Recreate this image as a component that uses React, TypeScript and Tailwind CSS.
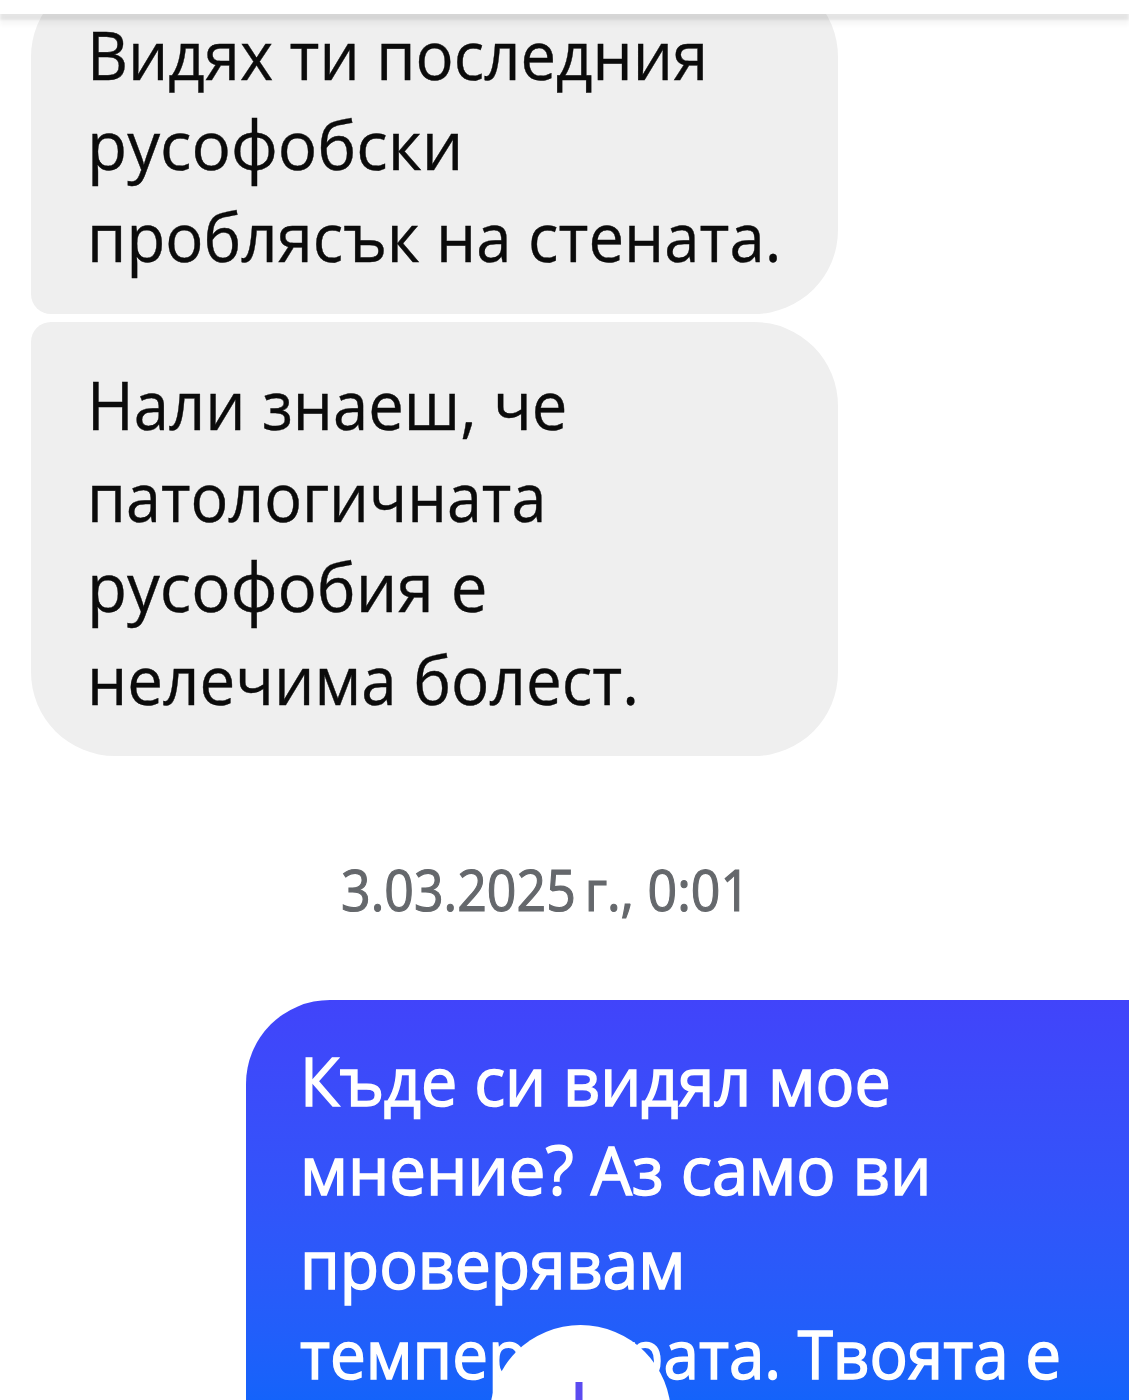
interface Line {
  text: string;
  height: string; // Tailwind height class of the row
  stretch: number; // horizontal scale of the row
}

const FIRST_MESSAGE: Line[] = [
  { text: 'Видях ти последния', height: 'h-[90px]', stretch: 0.933 },
  { text: 'русофобски', height: 'h-[92px]', stretch: 0.965 },
  { text: 'проблясък на стената.', height: 'h-[92px]', stretch: 0.934 },
];

const SECOND_MESSAGE: Line[] = [
  { text: 'Нали знаеш, че', height: 'h-[92px]', stretch: 0.933 },
  { text: 'патологичната', height: 'h-[90px]', stretch: 0.924 },
  { text: 'русофобия е', height: 'h-[93px]', stretch: 0.963 },
  { text: 'нелечима болест.', height: 'h-[92px]', stretch: 0.937 },
];

const REPLY: Line[] = [
  { text: 'Къде си видял мое', height: 'h-[89px]', stretch: 0.951 },
  { text: 'мнение? Аз само ви', height: 'h-[94px]', stretch: 0.961 },
  { text: 'проверявам', height: 'h-[90px]', stretch: 0.945 },
  { text: 'температурата. Твоята е', height: 'h-[92px]', stretch: 0.938 },
];

function Lines({ lines }: { lines: Line[] }) {
  return (
    <>
      {lines.map((line) => (
        <p
          key={line.text}
          className={`w-max origin-left whitespace-nowrap ${line.height}`}
          style={{ transform: `scaleX(${line.stretch})` }}
        >
          {line.text}
        </p>
      ))}
    </>
  );
}

export default function App() {
  return (
    <main className="relative flex h-[1400px] w-[1129px] flex-col overflow-hidden bg-white font-['Open_Sans',sans-serif] text-[68px] leading-[92px] text-[#0b0b0b] [-webkit-text-stroke:0.4px_currentColor]">
      <header className="relative z-10 h-[14px] shrink-0 bg-white shadow-[0_6px_2px_rgba(0,0,0,0.07),0_11px_4px_rgba(0,0,0,0.035)]" />

      {/* Incoming messages, the first one scrolled under the header */}
      <div className="-mt-[41px] ml-[31px] h-[341px] w-[807px] shrink-0 rounded-[84px] rounded-bl-[20px] bg-[#efefef] pt-[35px] pl-[56px]">
        <Lines lines={FIRST_MESSAGE} />
      </div>
      <div className="mt-[8px] ml-[31px] h-[434px] w-[807px] shrink-0 rounded-[84px] rounded-tl-[20px] bg-[#efefef] pt-[36px] pl-[56px]">
        <Lines lines={SECOND_MESSAGE} />
      </div>

      <time className="mt-[98px] ml-[341px] h-[70px] w-max origin-left scale-x-[0.926] text-[56px] leading-[70px] whitespace-nowrap text-[#65686c] [-webkit-text-stroke:1.2px_currentColor]">
        3.03.2025<span className="-ml-[5px]"> г., 0:01</span>
      </time>

      {/* Outgoing message */}
      <div className="mt-[76px] ml-[246px] h-[400px] shrink-0 rounded-tl-[84px] bg-linear-to-b from-[#4144fa] to-[#1463fa] pt-[34px] pl-[54px] text-white [-webkit-text-stroke:1.5px_currentColor]">
        <Lines lines={REPLY} />
      </div>

      {/* Scroll to bottom */}
      <button className="absolute top-[1325px] left-[490px] flex size-[181px] justify-center rounded-full bg-white pt-[57px]">
        <svg className="-ml-[4px] h-[70px] w-[64px]" viewBox="0 0 64 70" fill="none" stroke="#5b4bf0" strokeWidth="7">
          <path d="M32 0v64M6 38l26 26 26-26" />
        </svg>
      </button>
    </main>
  );
}
